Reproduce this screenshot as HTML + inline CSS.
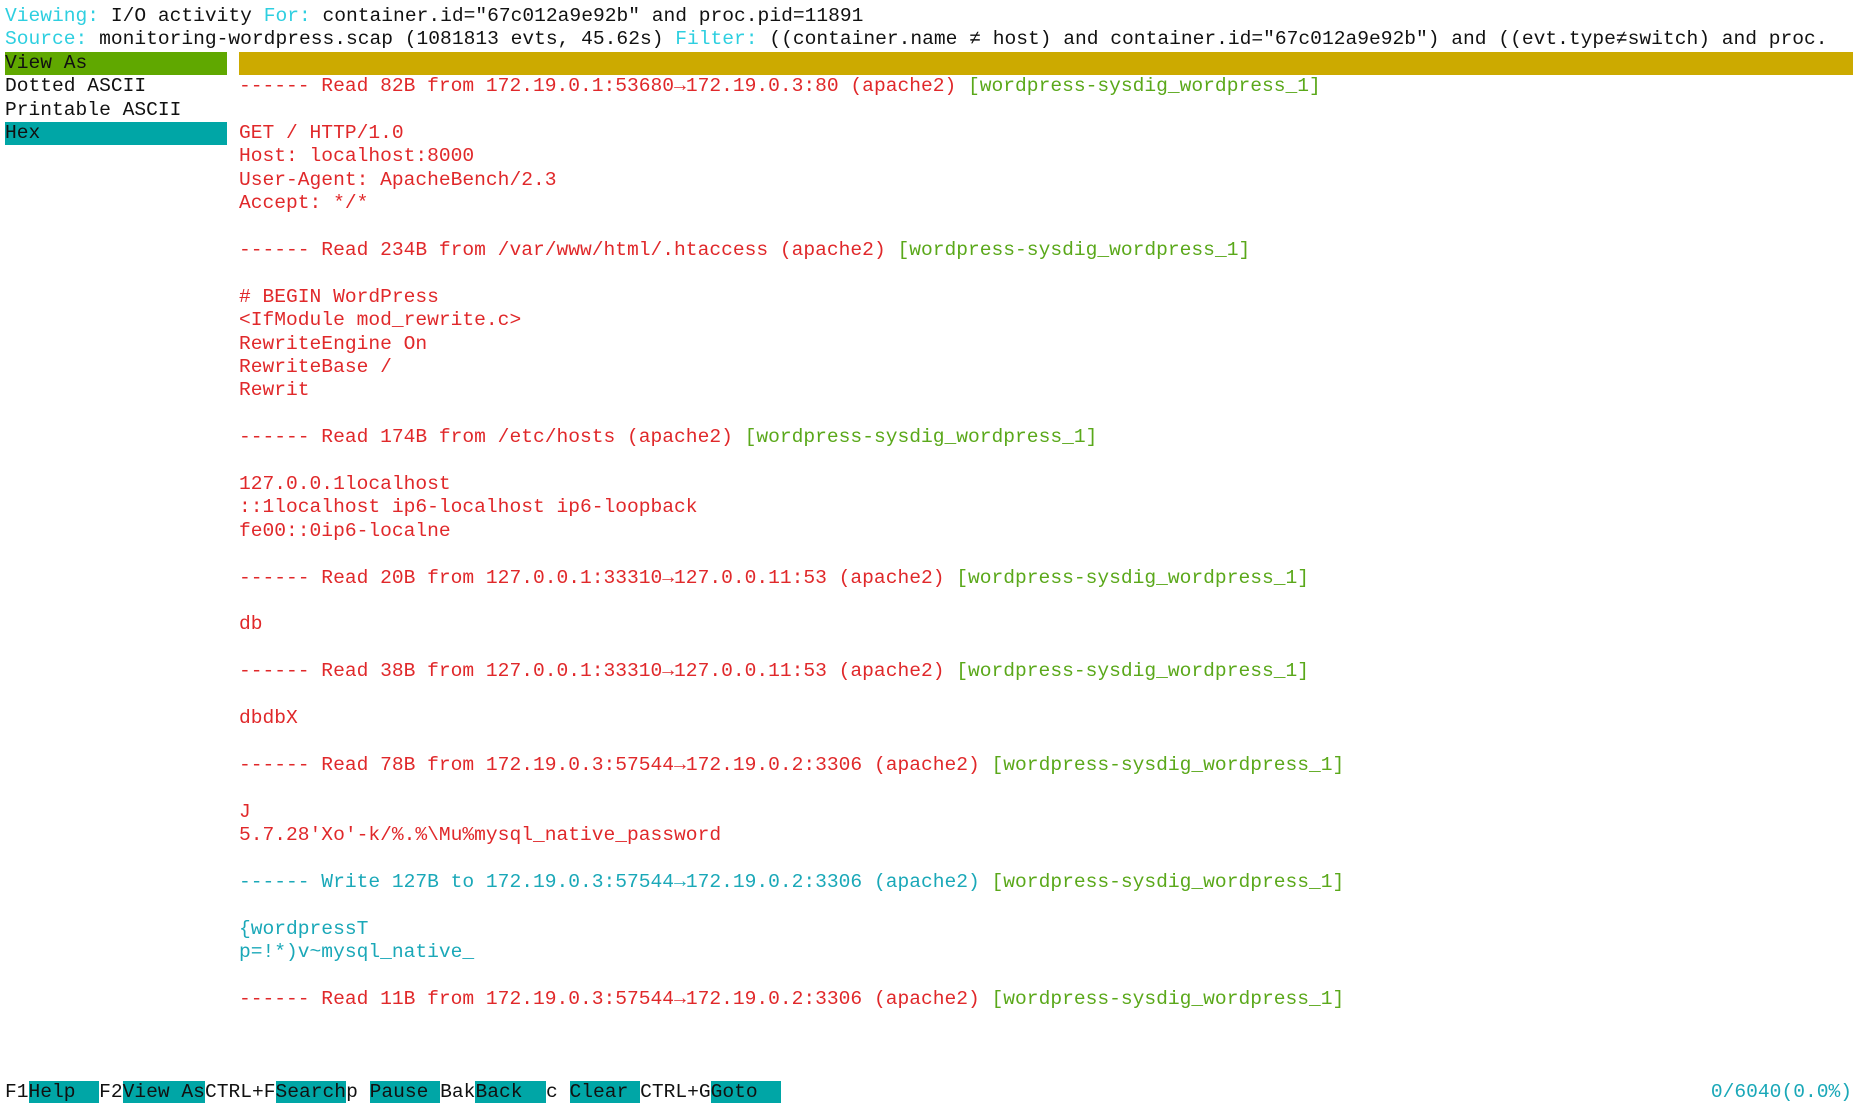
<!DOCTYPE html>
<html><head><meta charset="utf-8"><style>
html,body{margin:0;padding:0;background:#fff;width:1855px;height:1117px;overflow:hidden}
body{font-family:"Liberation Mono","DejaVu Sans Mono",monospace;font-size:19.6px;color:#111}
.r{position:absolute;left:5px;height:23.4px;line-height:23.4px;white-space:pre;margin-top:2px}
.c{left:239px}
.cy{color:#2ecfe0}.rd{color:#e0282a}.gr{color:#5aa81a}.tl{color:#1aa8b8}
.bt{background:#00a6a6}
.a{display:inline-block;width:0.6em;text-align:center;overflow:visible}
</style></head><body>
<div class="r" style="top:3px"><span class="cy">Viewing:</span> I/O activity <span class="cy">For:</span> container.id="67c012a9e92b" and proc.pid=11891</div>
<div class="r" style="top:26.4px"><span class="cy">Source:</span> monitoring-wordpress.scap (1081813 evts, 45.62s) <span class="cy">Filter:</span> ((container.name <span class="a">≠</span> host) and container.id="67c012a9e92b") and ((evt.type<span class="a">≠</span>switch) and proc.</div>
<div class="r" style="top:49.8px;width:222px;background:#60a800">View As</div>
<div class="r" style="top:49.8px;left:239px;right:2px;background:#ccaa00"></div>
<div class="r" style="top:73.2px">Dotted ASCII</div>
<div class="r" style="top:96.6px">Printable ASCII</div>
<div class="r bt" style="top:120px;width:222px">Hex</div>

<div class="r c rd" style="top:73.2px">------ Read 82B from 172.19.0.1:53680<span class="a">→</span>172.19.0.3:80 (apache2) <span class="gr">[wordpress-sysdig_wordpress_1]</span></div>
<div class="r c rd" style="top:120px">GET / HTTP/1.0</div>
<div class="r c rd" style="top:143.4px">Host: localhost:8000</div>
<div class="r c rd" style="top:166.8px">User-Agent: ApacheBench/2.3</div>
<div class="r c rd" style="top:190.2px">Accept: */*</div>
<div class="r c rd" style="top:237px">------ Read 234B from /var/www/html/.htaccess (apache2) <span class="gr">[wordpress-sysdig_wordpress_1]</span></div>
<div class="r c rd" style="top:283.8px"># BEGIN WordPress</div>
<div class="r c rd" style="top:307.2px">&lt;IfModule mod_rewrite.c&gt;</div>
<div class="r c rd" style="top:330.6px">RewriteEngine On</div>
<div class="r c rd" style="top:354px">RewriteBase /</div>
<div class="r c rd" style="top:377.4px">Rewrit</div>
<div class="r c rd" style="top:424.2px">------ Read 174B from /etc/hosts (apache2) <span class="gr">[wordpress-sysdig_wordpress_1]</span></div>
<div class="r c rd" style="top:471px">127.0.0.1localhost</div>
<div class="r c rd" style="top:494.4px">::1localhost ip6-localhost ip6-loopback</div>
<div class="r c rd" style="top:517.8px">fe00::0ip6-localne</div>
<div class="r c rd" style="top:564.6px">------ Read 20B from 127.0.0.1:33310<span class="a">→</span>127.0.0.11:53 (apache2) <span class="gr">[wordpress-sysdig_wordpress_1]</span></div>
<div class="r c rd" style="top:611.4px">db</div>
<div class="r c rd" style="top:658.2px">------ Read 38B from 127.0.0.1:33310<span class="a">→</span>127.0.0.11:53 (apache2) <span class="gr">[wordpress-sysdig_wordpress_1]</span></div>
<div class="r c rd" style="top:705px">dbdbX</div>
<div class="r c rd" style="top:751.8px">------ Read 78B from 172.19.0.3:57544<span class="a">→</span>172.19.0.2:3306 (apache2) <span class="gr">[wordpress-sysdig_wordpress_1]</span></div>
<div class="r c rd" style="top:798.6px">J</div>
<div class="r c rd" style="top:822px">5.7.28'Xo'-k/%.%\Mu%mysql_native_password</div>
<div class="r c tl" style="top:868.8px">------ Write 127B to 172.19.0.3:57544<span class="a">→</span>172.19.0.2:3306 (apache2) <span class="gr">[wordpress-sysdig_wordpress_1]</span></div>
<div class="r c tl" style="top:915.6px">{wordpressT</div>
<div class="r c tl" style="top:939px">p=!*)v~mysql_native_</div>
<div class="r c rd" style="top:985.8px">------ Read 11B from 172.19.0.3:57544<span class="a">→</span>172.19.0.2:3306 (apache2) <span class="gr">[wordpress-sysdig_wordpress_1]</span></div>

<div class="r" style="top:1079.4px">F1<span class="bt">Help  </span>F2<span class="bt">View As</span>CTRL+F<span class="bt">Search</span>p <span class="bt">Pause </span>Bak<span class="bt">Back  </span>c <span class="bt">Clear </span>CTRL+G<span class="bt">Goto  </span></div>
<div class="r tl" style="top:1079.4px;left:auto;right:3px">0/6040(0.0%)</div>
</body></html>
